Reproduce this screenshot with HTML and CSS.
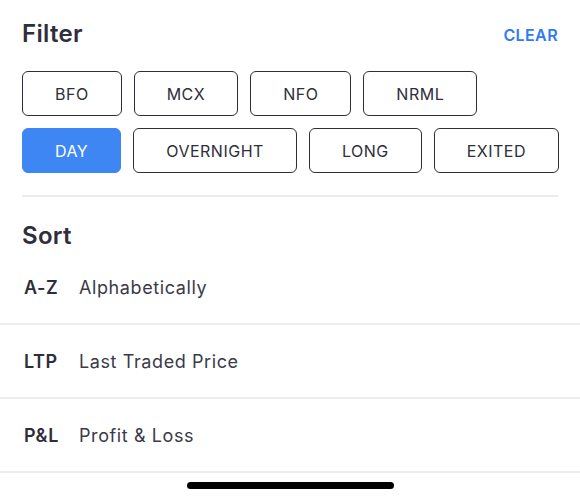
FILE: index.html
```html
<!DOCTYPE html>
<html lang="en">
<head>
<meta charset="utf-8">
<title>Filter</title>
<link rel="stylesheet" href="styles.css">
</head>
<body>
<div class="sheet">
  <section class="filter">
    <div class="header">
      <h2 class="title">Filter</h2>
      <a class="clear">CLEAR</a>
    </div>
    <div class="chips">
      <div class="chip-row">
        <button class="chip">BFO</button>
        <button class="chip">MCX</button>
        <button class="chip">NFO</button>
        <button class="chip">NRML</button>
      </div>
      <div class="chip-row">
        <button class="chip chip-active">DAY</button>
        <button class="chip">OVERNIGHT</button>
        <button class="chip">LONG</button>
        <button class="chip">EXITED</button>
      </div>
    </div>
    <div class="divider"></div>
    <h2 class="title sort-title">Sort</h2>
  </section>
  <ul class="sort-list">
    <li class="sort-item"><span class="sort-key">A-Z</span><span class="sort-label">Alphabetically</span></li>
    <li class="sort-item"><span class="sort-key">LTP</span><span class="sort-label">Last Traded Price</span></li>
    <li class="sort-item"><span class="sort-key">P&amp;L</span><span class="sort-label">Profit &amp; Loss</span></li>
  </ul>
  <div class="home-indicator"></div>
</div>
</body>
</html>
```

FILE: styles.css
```css
* {
  box-sizing: border-box;
}

html, body {
  margin: 0;
  padding: 0;
  background: #ffffff;
}

body {
  font-family: Inter, "Noto Sans", "Liberation Sans", sans-serif;
  color: #2e2e3a;
}

.sheet {
  width: 580px;
  height: 500px;
  overflow: hidden;
  display: flex;
  flex-direction: column;
}

.filter {
  padding: 18px 22px 0 22px;
}

.header {
  display: flex;
  justify-content: space-between;
  align-items: center;
}

.title {
  margin: 0;
  font-size: 24px;
  line-height: 32px;
  font-weight: 600;
  color: #2f2f3b;
  letter-spacing: 0.3px;
}

.clear {
  font-size: 16px;
  line-height: 20px;
  font-weight: 600;
  color: #2f7bf3;
  letter-spacing: 0.4px;
  margin-top: 1px;
}

.chips {
  margin-top: 21px;
  display: flex;
  flex-direction: column;
  gap: 12px;
}

.chip-row {
  display: flex;
  gap: 12px;
}

.chip {
  height: 45px;
  padding: 0 32px;
  border: 1.5px solid #2e2e38;
  border-radius: 6px;
  background: #ffffff;
  font-family: Inter, "Noto Sans", "Liberation Sans", sans-serif;
  font-size: 16px;
  font-weight: 400;
  letter-spacing: 0.5px;
  color: #2e2e38;
  display: flex;
  align-items: center;
  justify-content: center;
}

.chip-active {
  background: #3f86f5;
  border-color: #3f86f5;
  color: #ffffff;
}

.divider {
  margin-top: 22px;
  height: 2px;
  background: #ebebeb;
}

.sort-title {
  margin-top: 23px;
}

.sort-list {
  list-style: none;
  margin: 0;
  padding: 0;
}

.sort-item {
  height: 74px;
  padding: 0 22px;
  display: flex;
  align-items: center;
  border-bottom: 2px solid #ededed;
  font-size: 18px;
}

.sort-list .sort-item:first-child {
  height: 73px;
}

.sort-key {
  width: 57px;
  padding-left: 2px;
  font-weight: 600;
  color: #2e2e3a;
  letter-spacing: 0.6px;
}

.sort-label {
  font-weight: 400;
  color: #3a3a48;
  letter-spacing: 0.6px;
}

.home-indicator {
  align-self: center;
  margin-top: 9px;
  width: 207px;
  height: 7px;
  border-radius: 4px;
  background: #000000;
}
```
